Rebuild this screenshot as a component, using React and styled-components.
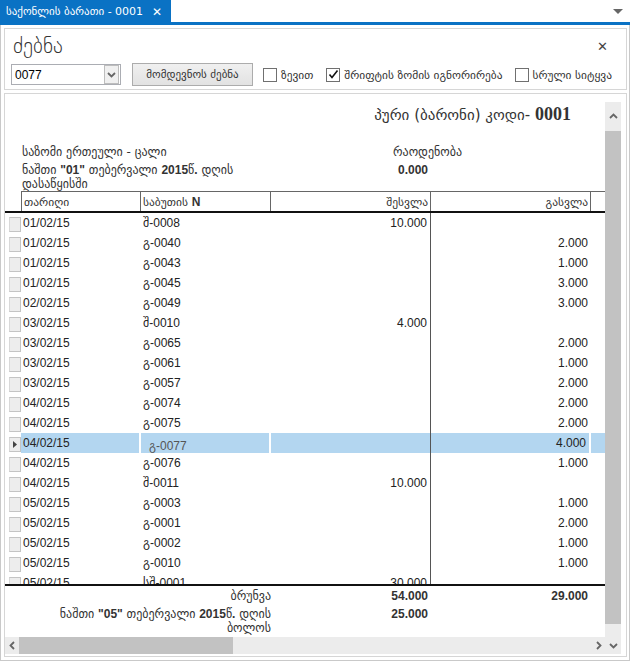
import React from 'react';
import styled, { createGlobalStyle } from 'styled-components';

const GlobalStyle = createGlobalStyle`
  html, body {
    margin: 0;
    padding: 0;
    background: #fff;
  }
  body {
    font-family: "Liberation Sans", "DejaVu Sans", sans-serif;
    font-size: 11px;
    color: #333;
  }
`;

const rows = [
  { date: '01/02/15', doc: 'შ-0008', inQty: '10.000', outQty: '' },
  { date: '01/02/15', doc: 'გ-0040', inQty: '', outQty: '2.000' },
  { date: '01/02/15', doc: 'გ-0043', inQty: '', outQty: '1.000' },
  { date: '01/02/15', doc: 'გ-0045', inQty: '', outQty: '3.000' },
  { date: '02/02/15', doc: 'გ-0049', inQty: '', outQty: '3.000' },
  { date: '03/02/15', doc: 'შ-0010', inQty: '4.000', outQty: '' },
  { date: '03/02/15', doc: 'გ-0065', inQty: '', outQty: '2.000' },
  { date: '03/02/15', doc: 'გ-0061', inQty: '', outQty: '1.000' },
  { date: '03/02/15', doc: 'გ-0057', inQty: '', outQty: '2.000' },
  { date: '04/02/15', doc: 'გ-0074', inQty: '', outQty: '2.000' },
  { date: '04/02/15', doc: 'გ-0075', inQty: '', outQty: '2.000' },
  { date: '04/02/15', doc: 'გ-0077', inQty: '', outQty: '4.000', selected: true },
  { date: '04/02/15', doc: 'გ-0076', inQty: '', outQty: '1.000' },
  { date: '04/02/15', doc: 'შ-0011', inQty: '10.000', outQty: '' },
  { date: '05/02/15', doc: 'გ-0003', inQty: '', outQty: '1.000' },
  { date: '05/02/15', doc: 'გ-0001', inQty: '', outQty: '2.000' },
  { date: '05/02/15', doc: 'გ-0002', inQty: '', outQty: '1.000' },
  { date: '05/02/15', doc: 'გ-0010', inQty: '', outQty: '1.000' },
  { date: '05/02/15', doc: 'სშ-0001', inQty: '30.000', outQty: '' }
];

// ==== window + tab strip
const Window = styled.div`
  width: 630px;
  height: 661px;
  display: flex;
  flex-direction: column;
  overflow: hidden;
`;

const TabStrip = styled.div`
  height: 22px;
  flex: none;
  display: flex;
  align-items: stretch;
  border-bottom: 3px solid #0a72c4;
`;

const Tab = styled.div`
  background: #0a72c4;
  color: #fff;
  display: flex;
  align-items: center;
  gap: 9px;
  padding: 1px 9px 0 6px;
  font-family: "DejaVu Sans", sans-serif;
  font-size: 11px;
`;

const TabClose = styled.span`
  font-weight: bold;
  font-size: 12px;
`;

const TabMenu = styled.div`
  margin-left: auto;
  margin-right: 7px;
  align-self: center;
  width: 0;
  height: 0;
  border-left: 5px solid transparent;
  border-right: 5px solid transparent;
  border-top: 5px solid #666;
`;

const Body = styled.div`
  flex: 1;
  min-height: 0;
  display: flex;
  flex-direction: column;
  gap: 3px;
  padding: 3px 2px 3px 3px;
  border: 1px solid #c9c9c9;
  border-top: none;
`;

// ==== search panel
const SearchPanel = styled.div`
  flex: none;
  height: 60px;
  border: 1px solid #d6d6d6;
  padding: 0 6px 0 6px;
  display: flex;
  flex-direction: column;
`;

const SearchTitleRow = styled.div`
  height: 34px;
  display: flex;
  align-items: center;
  justify-content: space-between;
`;

const SearchTitle = styled.span`
  font-family: "DejaVu Sans", sans-serif;
  font-size: 21px;
  font-weight: 300;
  color: #333;
  padding-left: 2px;
`;

const CloseX = styled.span`
  font-weight: bold;
  font-size: 13px;
  color: #444;
  padding-right: 12px;
`;

const ControlsRow = styled.div`
  display: flex;
  align-items: center;
`;

const Combo = styled.div`
  width: 105px;
  height: 19px;
  border: 1px solid #abadb3;
  display: flex;
  align-items: center;
  justify-content: space-between;
  padding-left: 3px;
  font-size: 12px;
  color: #000;
`;

const ComboButton = styled.div`
  width: 13px;
  height: 17px;
  border: 1px solid #bdbdbd;
  background: #f0f0f0;
  display: flex;
  align-items: center;
  justify-content: center;
  margin-right: 1px;
`;

const Button = styled.div`
  margin-left: 11px;
  width: 119px;
  height: 21px;
  border: 1px solid #acacac;
  background: linear-gradient(#f0f0f0, #e2e2e2);
  display: flex;
  align-items: center;
  justify-content: center;
  font-family: "DejaVu Sans", sans-serif;
  font-size: 11px;
  color: #333;
`;

const CheckItem = styled.label`
  display: flex;
  align-items: center;
  gap: 4px;
  margin-left: ${p => p.$gap}px;
  font-family: "DejaVu Sans", sans-serif;
  font-size: 11.4px;
  color: #333;
  white-space: nowrap;
`;

const Box = styled.span`
  width: 12px;
  height: 12px;
  border: 1px solid #707070;
  background: #fff;
  display: flex;
  align-items: center;
  justify-content: center;
`;

const Checkbox = ({ checked, label, gap }) => (
  <CheckItem $gap={gap}>
    <Box>
      {checked && (
        <svg width="11" height="11" viewBox="0 0 11 11">
          <polyline points="1.5,5.5 4,8.5 9.5,1.5" fill="none" stroke="#111" strokeWidth="1.6" />
        </svg>
      )}
    </Box>
    {label}
  </CheckItem>
);

// ==== report panel
const ReportPanel = styled.div`
  flex: 1;
  min-height: 0;
  border: 1px solid #d6d6d6;
  display: grid;
  grid-template-columns: 600px 16px 1fr;
  grid-template-rows: 1fr 17px 2px;
`;

const Report = styled.div`
  grid-column: 1;
  grid-row: 1;
  min-height: 0;
  display: flex;
  flex-direction: column;
  overflow: hidden;
`;

const ReportTitle = styled.div`
  flex: none;
  height: 51px;
  box-sizing: border-box;
  padding: 10px 34px 0 0;
  line-height: 20px;
  text-align: right;
  font-family: "DejaVu Sans", sans-serif;
  font-size: 15px;
  color: #333;
`;

const TitleCode = styled.b`
  font-family: "Liberation Serif", serif;
  font-size: 18px;
  font-weight: bold;
`;

const InfoGrid = styled.div`
  flex: none;
  display: grid;
  grid-template-columns: 371px 35px;
  row-gap: 4px;
  padding-left: 17px;
  line-height: 14px;
  font-family: "DejaVu Sans", sans-serif;
  font-size: 12px;
  white-space: nowrap;
`;

const Strong = styled.b`
  font-family: "Liberation Sans", sans-serif;
  font-size: 12px;
  font-weight: bold;
`;

const NumValue = styled.div`
  font-family: "Liberation Sans", sans-serif;
  font-weight: bold;
  font-size: 12px;
  text-align: right;
`;

const cols = '16px 120px 130px 160px 160px 14px';

const HeaderRow = styled.div`
  flex: none;
  display: grid;
  grid-template-columns: ${cols};
  height: 22px;
  box-sizing: border-box;
  border-bottom: 2px solid #111;
`;

const HeadCell = styled.div`
  border-top: 1px solid #666;
  border-right: ${p => (p.$last ? 'none' : '1px solid #666')};
  border-left: ${p => (p.$first ? '1px solid #666' : 'none')};
  display: flex;
  align-items: center;
  justify-content: ${p => (p.$right ? 'flex-end' : 'flex-start')};
  padding: 0 2px;
  font-family: "DejaVu Sans", sans-serif;
  font-size: 11.5px;
  color: #333;
  white-space: nowrap;
  overflow: hidden;
`;

const Blank = styled.div``;

const TableBody = styled.div`
  flex: none;
  height: 371px;
  overflow: hidden;
`;

const Row = styled.div`
  display: grid;
  grid-template-columns: ${cols};
  height: 20px;
`;

const RowHead = styled.div`
  display: flex;
  align-items: flex-start;
  padding: 4px 0 0 4px;
`;

const RowHeadBox = styled.div`
  width: 11px;
  height: 13px;
  background: #ededed;
  border: 1px solid #c4c4c4;
  border-left-color: #d8d8d8;
  display: flex;
  align-items: center;
  justify-content: center;
`;

const Cell = styled.div`
  display: flex;
  align-items: center;
  justify-content: ${p => (p.$right ? 'flex-end' : 'flex-start')};
  padding: ${p => (p.$right ? '0 3px 0 0' : '0 0 0 2px')};
  font-size: 12px;
  color: #222;
  white-space: nowrap;
  background: ${p => (p.$selected ? '#b3d6f0' : 'transparent')};
  border-right: ${p => (p.$divider ? '1px solid #555' : p.$selected && p.$gapline ? '2px solid #fff' : 'none')};
`;

const DocCell = styled(Cell)`
  padding: ${p => (p.$selected ? '5px 0 0 8px' : '0 0 0 2px')};
  color: ${p => (p.$selected ? '#555' : '#222')};
`;

const Footer = styled.div`
  flex: none;
  border-top: 2px solid #111;
  padding-top: 3px;
  display: grid;
  grid-template-columns: 266px 160px 160px;
  row-gap: 4px;
  line-height: 14px;
`;

const FootLabel = styled.div`
  text-align: right;
  font-family: "DejaVu Sans", sans-serif;
  font-size: 12px;
  color: #333;
`;

const FootNum = styled.div`
  text-align: right;
  font-weight: bold;
  font-size: 12px;
  color: #333;
  padding-right: 3px;
`;

// ==== scroll bars
const VScroll = styled.div`
  grid-column: 2;
  grid-row: 1 / 3;
  margin-top: 8px;
  background: #ececec;
  display: flex;
  flex-direction: column;
`;

const ScrollArrow = styled.div`
  flex: none;
  height: ${p => p.$h}px;
  width: ${p => p.$w}px;
  display: flex;
  align-items: center;
  justify-content: center;
`;

const VThumb = styled.div`
  height: 493px;
  background: #c2c2c2;
  flex: none;
`;

const Spacer = styled.div`
  flex: 1;
`;

const HScroll = styled.div`
  grid-column: 1;
  grid-row: 2;
  background: #ececec;
  display: flex;
  align-items: stretch;
`;

const HThumb = styled.div`
  width: 214px;
  background: #c2c2c2;
`;

const Chevron = ({ dir }) => {
  const pts = {
    up: '1,6 4.5,2.5 8,6',
    down: '1,3 4.5,6.5 8,3',
    left: '6,1 2.5,4.5 6,8',
    right: '3,1 6.5,4.5 3,8'
  }[dir];
  return (
    <svg width="9" height="9" viewBox="0 0 9 9">
      <polyline points={pts} fill="none" stroke="#666" strokeWidth="1.8" />
    </svg>
  );
};

export default function App() {
  return (
    <Window>
      <GlobalStyle />
      <TabStrip>
        <Tab>
          საქონლის ბარათი - 0001
          <TabClose>✕</TabClose>
        </Tab>
        <TabMenu />
      </TabStrip>
      <Body>
        <SearchPanel>
          <SearchTitleRow>
            <SearchTitle>ძებნა</SearchTitle>
            <CloseX>✕</CloseX>
          </SearchTitleRow>
          <ControlsRow>
            <Combo>
              0077
              <ComboButton>
                <Chevron dir="down" />
              </ComboButton>
            </Combo>
            <Button>მომდევნოს ძებნა</Button>
            <Checkbox gap={10} label="ზევით" />
            <Checkbox gap={13} checked label="შრიფტის ზომის იგნორირება" />
            <Checkbox gap={12} label="სრული სიტყვა" />
          </ControlsRow>
        </SearchPanel>

        <ReportPanel>
          <Report>
            <ReportTitle>
              პური (ბარონი) კოდი- <TitleCode>0001</TitleCode>
            </ReportTitle>
            <InfoGrid>
              <div>საზომი ერთეული - ცალი</div>
              <div>რაოდენობა</div>
              <div>
                ნაშთი <Strong>"01"</Strong> თებერვალი <Strong>2015</Strong>წ<Strong>.</Strong> დღის
                <br />
                დასაწყისში
              </div>
              <NumValue>0.000</NumValue>
            </InfoGrid>
            <HeaderRow>
              <Blank />
              <HeadCell $first>თარიღი</HeadCell>
              <HeadCell>
                საბუთის&nbsp;<Strong>N</Strong>
              </HeadCell>
              <HeadCell $right>შესვლა</HeadCell>
              <HeadCell $right>გასვლა</HeadCell>
              <HeadCell $last />
            </HeaderRow>
            <TableBody>
              {rows.map((r, i) => (
                <Row key={i}>
                  <RowHead>
                    <RowHeadBox>
                      {r.selected && (
                        <svg width="5" height="7" viewBox="0 0 5 7">
                          <polygon points="0,0 4,3.5 0,7" fill="#444" />
                        </svg>
                      )}
                    </RowHeadBox>
                  </RowHead>
                  <Cell $selected={r.selected} $gapline>{r.date}</Cell>
                  <DocCell $selected={r.selected} $gapline>{r.doc}</DocCell>
                  <Cell $right $divider $selected={r.selected}>{r.inQty}</Cell>
                  <Cell $right $selected={r.selected} $gapline>{r.outQty}</Cell>
                  <Cell $selected={r.selected} />
                </Row>
              ))}
            </TableBody>
            <Footer>
              <FootLabel>ბრუნვა</FootLabel>
              <FootNum>54.000</FootNum>
              <FootNum>29.000</FootNum>
              <FootLabel>
                ნაშთი <Strong>"05"</Strong> თებერვალი <Strong>2015</Strong>წ<Strong>.</Strong> დღის
                <br />
                ბოლოს
              </FootLabel>
              <FootNum>25.000</FootNum>
              <div />
            </Footer>
          </Report>

          <VScroll>
            <ScrollArrow $h={29} $w={16}>
              <Chevron dir="up" />
            </ScrollArrow>
            <VThumb />
            <Spacer />
            <ScrollArrow $h={17} $w={16}>
              <Chevron dir="down" />
            </ScrollArrow>
          </VScroll>

          <HScroll>
            <ScrollArrow $h={17} $w={14}>
              <Chevron dir="left" />
            </ScrollArrow>
            <HThumb />
            <Spacer />
            <ScrollArrow $h={17} $w={14}>
              <Chevron dir="right" />
            </ScrollArrow>
          </HScroll>
        </ReportPanel>
      </Body>
    </Window>
  );
}
